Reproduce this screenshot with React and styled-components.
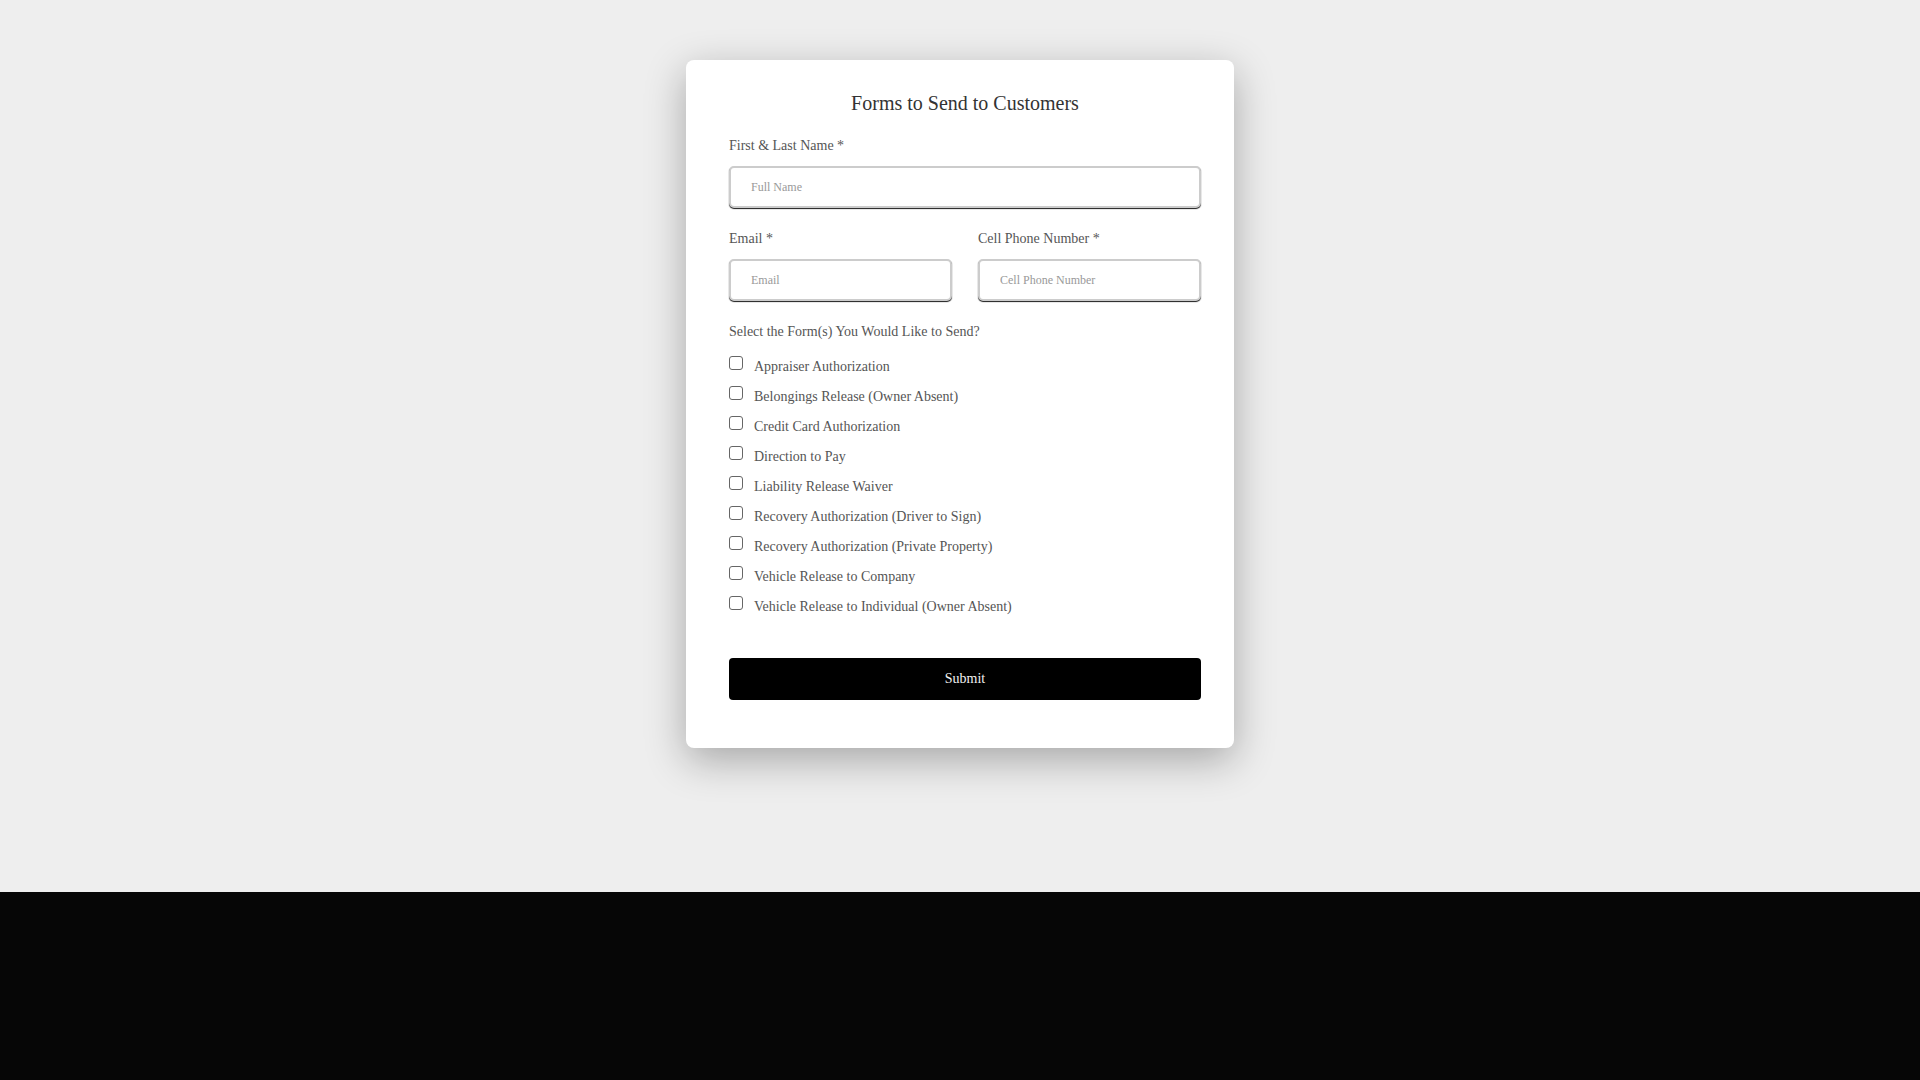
import React, { useState } from "react";
import styled, { createGlobalStyle } from "styled-components";

const GlobalStyle = createGlobalStyle`
  * {
    box-sizing: border-box;
  }
  body {
    margin: 0;
    background: #eeeeee;
    font-family: "Liberation Serif", "Times New Roman", serif;
  }
`;

const forms = [
  "Appraiser Authorization",
  "Belongings Release (Owner Absent)",
  "Credit Card Authorization",
  "Direction to Pay",
  "Liability Release Waiver",
  "Recovery Authorization (Driver to Sign)",
  "Recovery Authorization (Private Property)",
  "Vehicle Release to Company",
  "Vehicle Release to Individual (Owner Absent)",
];

const Page = styled.div`
  display: flex;
  flex-direction: column;
  min-height: 100vh;
`;

const Main = styled.main`
  height: 892px;
  padding-top: 60px;
  display: flex;
  justify-content: center;
  align-items: flex-start;
`;

const Footer = styled.footer`
  flex: 1;
  min-height: 188px;
  background: #060606;
`;

const Card = styled.form`
  width: 548px;
  background: #fff;
  border-radius: 8px;
  box-shadow: 0 12px 40px rgba(0, 0, 0, 0.3);
  padding: 31px 33px 48px 43px;
  display: flex;
  flex-direction: column;
`;

const Title = styled.h2`
  margin: 0 0 23px;
  font-size: 20px;
  line-height: 24px;
  font-weight: 400;
  color: #333;
  text-align: center;
`;

const Row = styled.div`
  display: grid;
  grid-template-columns: 1fr 1fr;
  column-gap: 26px;
`;

const Field = styled.div`
  display: flex;
  flex-direction: column;
  margin-bottom: 23px;
`;

const Label = styled.label`
  font-size: 14px;
  line-height: 16px;
  color: #555;
  margin-bottom: 12px;
`;

const Input = styled.input`
  height: 42px;
  width: 100%;
  border: 2px solid #cccccc;
  border-radius: 5px;
  box-shadow: 0 1px 1px rgba(0, 0, 0, 0.9);
  padding: 0 20px;
  font-family: inherit;
  font-size: 12px;
  color: #333;
  outline: none;

  &::placeholder {
    color: #999;
  }
`;

const CheckList = styled.div`
  display: flex;
  flex-direction: column;
`;

const CheckRow = styled.label`
  display: flex;
  align-items: center;
  height: 30px;
  gap: 11px;
  font-size: 14px;
  color: #555;
  cursor: pointer;
`;

const Box = styled.input.attrs({ type: "checkbox" })`
  appearance: none;
  margin: 0;
  width: 14px;
  height: 14px;
  flex: none;
  border: 1px solid #666;
  border-radius: 3px;
  background: #fff;
  position: relative;
  top: -4px;
  cursor: pointer;

  &:checked {
    background: #000;
    border-color: #000;
  }
`;

const Submit = styled.button`
  margin-top: 36px;
  height: 42px;
  width: 100%;
  border: none;
  border-radius: 4px;
  background: #000;
  color: #f2f2f2;
  font-family: inherit;
  font-size: 14px;
  cursor: pointer;
`;

export default function App() {
  const [picked, setPicked] = useState({});

  const toggle = (name) => setPicked((p) => ({ ...p, [name]: !p[name] }));

  return (
    <Page>
      <GlobalStyle />
      <Main>
        <Card onSubmit={(e) => e.preventDefault()}>
          <Title>Forms to Send to Customers</Title>
          <Field>
            <Label>First &amp; Last Name *</Label>
            <Input placeholder="Full Name" />
          </Field>
          <Row>
            <Field>
              <Label>Email *</Label>
              <Input type="email" placeholder="Email" />
            </Field>
            <Field>
              <Label>Cell Phone Number *</Label>
              <Input type="tel" placeholder="Cell Phone Number" />
            </Field>
          </Row>
          <Label>Select the Form(s) You Would Like to Send?</Label>
          <CheckList>
            {forms.map((name) => (
              <CheckRow key={name}>
                <Box checked={!!picked[name]} onChange={() => toggle(name)} />
                {name}
              </CheckRow>
            ))}
          </CheckList>
          <Submit type="submit">Submit</Submit>
        </Card>
      </Main>
      <Footer />
    </Page>
  );
}
